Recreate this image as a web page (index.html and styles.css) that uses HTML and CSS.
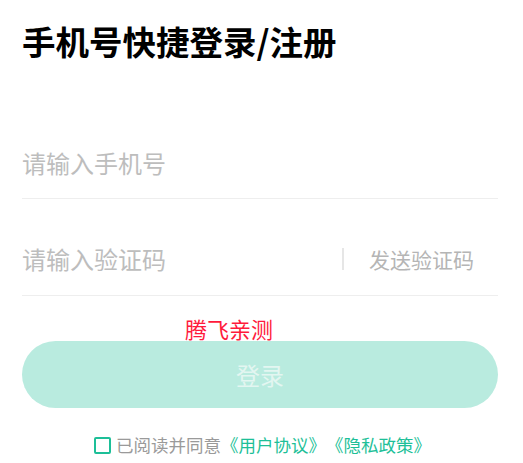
FILE: index.html
```html
<!DOCTYPE html>
<html lang="zh-CN">
<head>
<meta charset="utf-8">
<title>手机号快捷登录/注册</title>
<link rel="stylesheet" href="styles.css">
</head>
<body>
<main class="page">
  <h1 class="title">手机号快捷登录/注册</h1>
  <div class="field field-phone">
    <input class="input" type="tel" placeholder="请输入手机号">
  </div>
  <div class="field field-code">
    <input class="input" type="text" placeholder="请输入验证码">
    <span class="sep"></span>
    <span class="send">发送验证码</span>
  </div>
  <div class="note">腾飞亲测</div>
  <button class="login" type="button">登录</button>
  <div class="agree">
    <span class="check"></span>
    <span class="agree-text">已阅读并同意</span><a class="link">《用户协议》</a><a class="link">《隐私政策》</a>
  </div>
</main>
</body>
</html>
```
FILE: styles.css
```css
html, body {
  margin: 0;
  padding: 0;
  background: #ffffff;
}
body {
  font-family: "Noto Sans CJK SC", "Noto Sans", sans-serif;
}
.page {
  padding: 0 25px 0 22px;
  display: flex;
  flex-direction: column;
}
.title {
  margin: 24px 0 0;
  font-size: 33.5px;
  line-height: 34px;
  font-weight: 700;
  color: #000;
}
.field {
  display: flex;
  align-items: center;
  border-bottom: 1px solid #eeeeee;
}
.field-phone {
  margin-top: 70px;
  height: 70px;
}
.field-code {
  margin-top: 24px;
  height: 72px;
}
.input {
  flex: 1;
  min-width: 0;
  border: none;
  outline: none;
  padding: 0;
  margin: 0;
  background: transparent;
  font-family: "Noto Sans CJK SC", "Noto Sans", sans-serif;
  font-size: 24px;
  line-height: 30px;
  color: #333;
}
.input::placeholder {
  color: #bdbdbd;
}
.sep {
  width: 2px;
  height: 22px;
  background: #e6e6e6;
  margin-right: 25px;
}
.send {
  font-size: 21px;
  line-height: 24px;
  color: #b5b5b5;
  margin-right: 24px;
}
.note {
  margin: 21px 0 0 163px;
  font-size: 22px;
  line-height: 22px;
  color: #ff1a3c;
}
.login {
  margin-top: 2px;
  height: 67px;
  border: none;
  border-radius: 34px;
  background: #b9ebdf;
  color: #e3f6f1;
  font-family: "Noto Sans CJK SC", "Noto Sans", sans-serif;
  font-size: 24px;
  padding: 0;
}
.agree {
  margin-top: 28px;
  display: flex;
  align-items: center;
  justify-content: center;
  font-size: 17.5px;
  line-height: 18px;
  padding-left: 5px;
}
.check {
  width: 13px;
  height: 13px;
  border: 2px solid #1dbf98;
  border-radius: 2px;
  margin-right: 5px;
}
.agree-text {
  color: #9a9a9a;
}
.link {
  color: #1dbf98;
}
```
